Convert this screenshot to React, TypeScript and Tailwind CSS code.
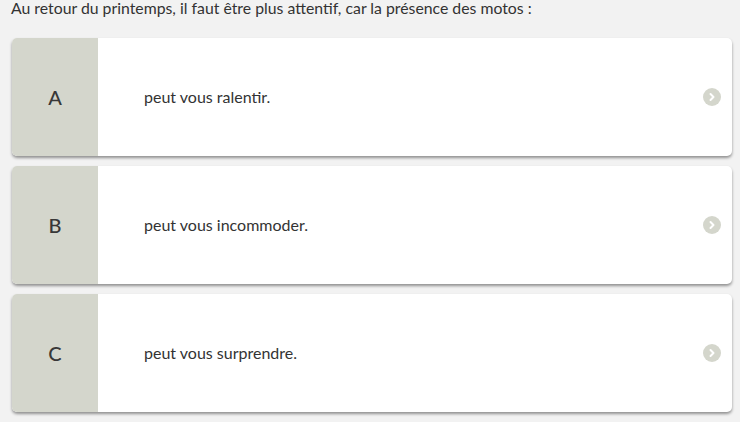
const ANSWERS = [
  { letter: "A", text: "peut vous ralentir." },
  { letter: "B", text: "peut vous incommoder." },
  { letter: "C", text: "peut vous surprendre." },
];

function Chevron() {
  return (
    <span className="flex h-[18px] w-[18px] items-center justify-center rounded-full bg-[#d4d6cc]">
      <svg width="10" height="10" viewBox="0 0 10 10" aria-hidden="true">
        <path
          d="M3.5 2 L6.5 5 L3.5 8"
          fill="none"
          stroke="#ffffff"
          strokeWidth="2"
          strokeLinecap="round"
          strokeLinejoin="round"
        />
      </svg>
    </span>
  );
}

export default function App() {
  return (
    <div className="min-h-screen bg-[#f2f2f2] px-3 font-['Lato',sans-serif] text-[#333333]">
      <p className="-ml-px text-[15.8px] leading-[16px]">
        Au retour du printemps, il faut être plus attentif, car la présence des motos :
      </p>
      <div className="mt-[22px] flex w-[720px] flex-col gap-[10px]">
        {ANSWERS.map((a) => (
          <div
            key={a.letter}
            className="flex h-[118px] overflow-hidden rounded-[5px] bg-white shadow-[0_2px_3px_rgba(0,0,0,0.4)]"
          >
            <div className="flex w-[86px] shrink-0 items-center justify-center bg-[#d4d6cc] pb-px text-[20px] font-medium text-[#383838]">
              {a.letter}
            </div>
            <div className="flex flex-1 items-center pl-[46px] text-[16px]">{a.text}</div>
            <div className="flex items-center pr-[11px]">
              <Chevron />
            </div>
          </div>
        ))}
      </div>
    </div>
  );
}
